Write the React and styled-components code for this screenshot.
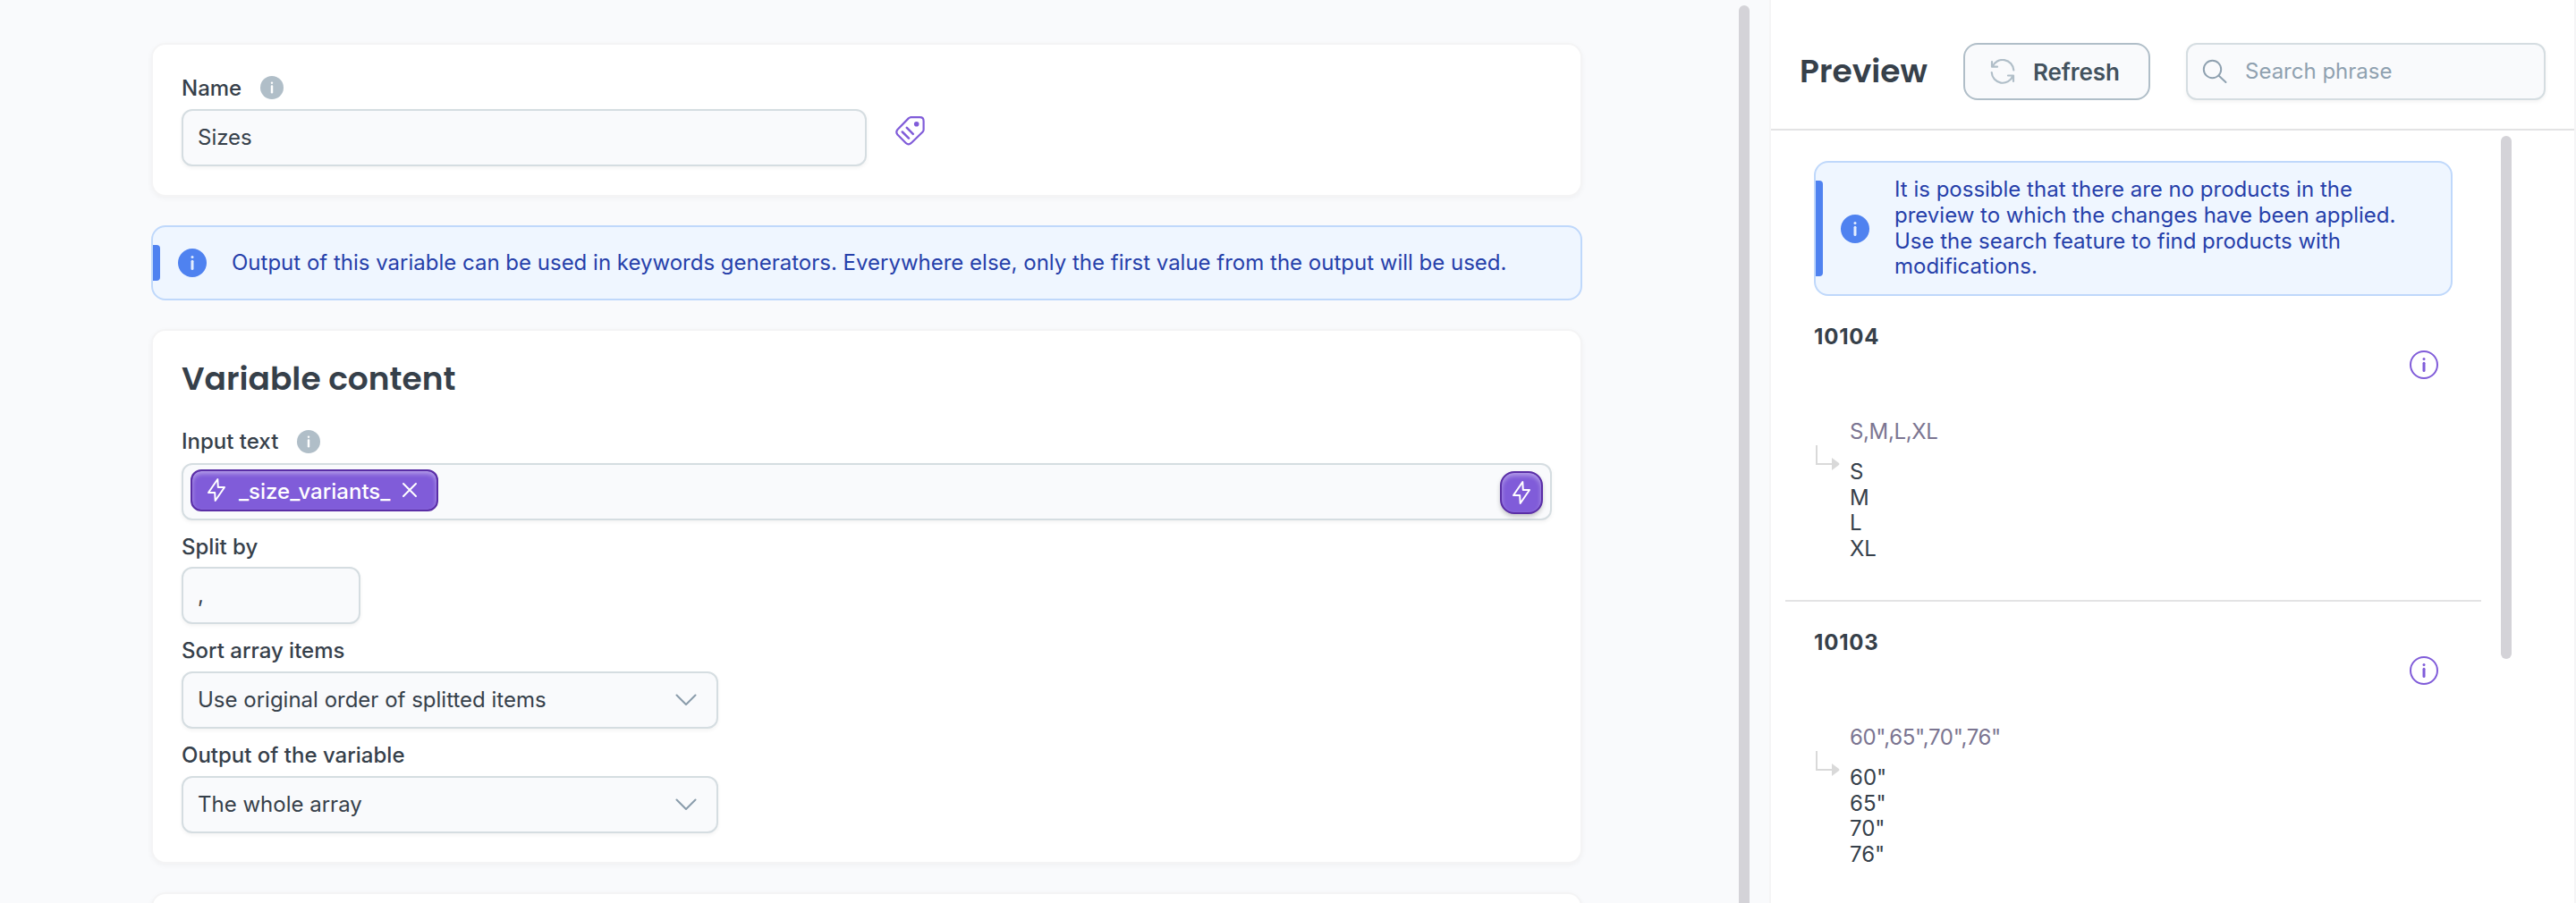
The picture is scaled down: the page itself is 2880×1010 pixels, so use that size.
import React from 'react';
import styled, { createGlobalStyle } from 'styled-components';

const textColor = '#36404a';
const accent = '#805cd9';
const accentDark = '#5a2ea6';
const muted = '#b0bec8';
const inputBg = '#f9fafc';
const inputBorder = '#d5dde1';

const GlobalStyle = createGlobalStyle`
  * { box-sizing: border-box; }
  body {
    margin: 0;
    overflow: hidden;
    background: #f9fafc;
    color: ${textColor};
    font-family: Inter, "Liberation Sans", sans-serif;
    font-size: 24px;
    line-height: 28.8px;
  }
  svg { flex-shrink: 0; }
`;

const Page = styled.div`
  display: flex;
  height: 1010px;
  overflow: hidden;
`;

const Editor = styled.main`
  width: 1944px;
  padding: 48px 175px 0 169px;
  display: flex;
  flex-direction: column;
  gap: 32px;
  flex-shrink: 0;
`;

const Card = styled.section`
  flex-shrink: 0;
  height: ${props => props.height};
  padding: 32px;
  background: #fff;
  border: 2px solid #f4f4f5;
  border-radius: 16px;
  box-shadow: 0 2px 6px rgba(0,0,0,0.04);
`;

const Heading = styled.h2`
  margin: 0;
  font-family: Poppins, Inter, sans-serif;
  font-size: 36px;
  font-weight: 600;
  line-height: 44px;
  white-space: nowrap;
`;

const CardHeading = styled(Heading)`
  margin-bottom: 31.6px;
`;

const Label = styled.div`
  display: flex;
  align-items: center;
  gap: 21px;
  height: 32px;
  margin-bottom: 8px;
  font-weight: 500;
`;

const LabelText = styled.span`
  padding-top: 2px;
`;

const FieldLabel = styled(Label)`
  height: 28.8px;
  margin-top: 16px;
`;

const Row = styled.div`
  display: flex;
  gap: 32px;
`;

const Field = styled.div`
  display: flex;
  align-items: center;
  justify-content: space-between;
  width: ${props => props.width || '100%'};
  height: 64px;
  padding: 0 ${props => props.tight ? '8px' : '16px'};
  background: ${inputBg};
  border: 2px solid ${inputBorder};
  border-radius: 12px;
  box-shadow: 0 2px 4px rgba(0,0,0,0.05);
`;

const SelectField = styled(Field)`
  padding-right: 22px;
`;

const SearchField = styled(Field)`
  justify-content: flex-start;
  gap: 20px;
  color: #8fa1b0;
`;

const TagIconBox = styled.div`
  display: flex;
  padding-top: 8px;
`;

const Alert = styled.div`
  display: flex;
  align-items: center;
  flex-shrink: 0;
  min-height: 84px;
  padding: 16px 40px 16px 0;
  background: #eff6ff;
  border: 2px solid #bfd8fb;
  border-radius: 16px;
  color: #2640aa;
`;

const AlertBar = styled.div`
  align-self: stretch;
  flex-shrink: 0;
  width: 8px;
  margin: 4px 20px 4px 0;
  background: #4f82f0;
  border-radius: 0 4px 4px 0;
`;

const AlertText = styled.div`
  margin-left: 28px;
`;

const Chip = styled.div`
  display: flex;
  align-items: center;
  width: 277px;
  height: 47px;
  margin-bottom: 3px;
  padding: 0 16px;
  background: ${accent};
  border: 2px solid ${accentDark};
  border-radius: 12px;
  box-shadow: inset 0 3px 5px rgba(255,255,255,0.4);
  color: #fff;
  font-weight: 500;

  svg:last-child { margin-left: 13px; }
`;

const ChipText = styled.span`
  margin: 4px 0 0 14px;
`;

const BoltButton = styled.button`
  display: flex;
  align-items: center;
  justify-content: center;
  width: 48px;
  height: 48px;
  margin: 2px 0 0;
  padding: 0;
  background: ${accent};
  border: 2px solid ${accentDark};
  border-radius: 16px;
  box-shadow: inset 0 3px 5px rgba(255,255,255,0.4), 0 3px 5px rgba(0,0,0,0.2);
`;

const Scrollbar = styled.div`
  flex-shrink: 0;
  width: 12px;
  height: ${props => props.height};
  margin: ${props => props.offset} 22px 0;
  background: #d4d3d8;
  border-radius: 6px;
`;

const EditorScrollbar = styled(Scrollbar)`
  margin-left: 0;
`;

const Preview = styled.aside`
  width: 902px;
  flex-shrink: 0;
  background: #fff;
  border: solid #f5f5f6;
  border-width: 0 2px;
`;

const PreviewHeader = styled.header`
  display: flex;
  align-items: flex-start;
  height: 146px;
  padding: 48px 32px 0;
  border-bottom: 2px solid #e3e3e4;
`;

const PreviewHeading = styled(Heading)`
  width: 183px;
  margin-top: 10px;
`;

const RefreshButton = styled.button`
  display: flex;
  align-items: center;
  width: 209px;
  height: 64px;
  margin: 0 40px 0 0;
  padding: 0 0 0 28px;
  gap: 20px;
  background: ${inputBg};
  border: 2px solid ${muted};
  border-radius: 16px;
  color: #43525e;
  font: 600 26px Inter, sans-serif;
  letter-spacing: -0.1px;
`;

const PreviewBody = styled.div`
  display: flex;
  align-items: flex-start;
  padding-left: 16px;
`;

const Results = styled.div`
  width: 778px;

  ${Alert} { margin: 34px 32px 0; }
`;

const Item = styled.article`
  height: 342px;
  padding: 32px 32px 0;
  border-bottom: 2px solid #e3e3e4;
`;

const ItemTitle = styled.div`
  font-weight: 700;
  letter-spacing: 0.8px;
`;

const ItemActions = styled.div`
  display: flex;
  justify-content: flex-end;
  padding-right: 16px;
  height: 77px;
`;

const ItemContent = styled.div`
  display: flex;
  gap: 10px;

  > svg { margin: 29px 0 0 2px; }
`;

const Source = styled.div`
  margin-bottom: 16px;
  color: #7b7591;
  letter-spacing: -0.35px;
`;

const InfoIcon = ({ size = 32, fill = 'none', stroke = 'none', color }) => (
  <svg width={size} height={size} viewBox="0 0 32 32">
    <circle cx="16" cy="16" r={fill === 'none' ? 15 : 16} fill={fill} stroke={stroke} strokeWidth="2" />
    <circle cx="16" cy="9.4" r="1.5" fill={color} />
    <path d="M16 14.2v8.4" stroke={color} strokeWidth="3" strokeLinecap="round" />
  </svg>
);

const BoltIcon = () => (
  <svg width="22" height="28" viewBox="0 0 22 28" fill="none" stroke="#fff" strokeWidth="2" strokeLinejoin="round">
    <path d="M12.3 2 12.8 11H20L9.7 26 9.2 17H2Z" />
  </svg>
);

const CloseIcon = () => (
  <svg width="18" height="18" viewBox="0 0 18 18" stroke="#fff" strokeWidth="2" strokeLinecap="round">
    <path d="M2 2 16 16M16 2 2 16" />
  </svg>
);

const TagIcon = () => (
  <svg width="33" height="33" viewBox="0 0 33 33" fill="none" stroke={accent} strokeWidth="2.2" strokeLinecap="round">
    <path d="M17.5 1.2H27.5Q31.6 1.2 31.6 5.500V15Q31.6 16.500 30.600 17.500L17.500 30.200Q14.700 32.500 12 30.200L2.400 20.500Q.2 17.800 2.400 15L14.700 2.400Q16 1.200 17.500 1.200Z" />
    <circle cx="23.700" cy="8.700" r="2.800" fill={accent} stroke="none" />
    <path d="M7.800 17.500 15 24.700M12.800 12.800 19.800 19.800" strokeWidth="2.500" />
  </svg>
);

const ChevronIcon = () => (
  <svg width="24" height="14" viewBox="0 0 24 14" fill="none" stroke="#8a9cab" strokeWidth="2" strokeLinecap="round" strokeLinejoin="round">
    <path d="M1.5 1.5 12 12 22.5 1.5" />
  </svg>
);

const RefreshIcon = () => (
  <svg width="28" height="28" viewBox="0 0 28 28" fill="none" stroke={muted} strokeWidth="2.2" strokeLinecap="round" strokeLinejoin="round">
    <path d="M2 3V8.700H8M2.600 8.700A12.300 12.300 0 0 1 26.300 12.500M26 25V18.500H20M25.400 19A12.300 12.300 0 0 1 1.700 15" />
  </svg>
);

const SearchIcon = () => (
  <svg width="28" height="28" viewBox="0 0 28 28" fill="none" stroke="#8fa1b0" strokeWidth="2" strokeLinecap="round">
    <circle cx="11.5" cy="11.5" r="9.7" />
    <path d="M18.5 18.5 26.5 26" />
  </svg>
);

const ArrowIcon = () => (
  <svg width="28" height="28" viewBox="0 0 28 28">
    <path d="M1 0V21H19" fill="none" stroke="#d9d9d9" strokeWidth="2" />
    <path d="M18 14 26 20Q27 21 26 22L18 28Z" fill="#d9d9d9" />
  </svg>
);

const HelpIcon = () => <InfoIcon size={26} fill={muted} color="#fff" />;

const Notice = ({ children }) => (
  <Alert>
    <AlertBar />
    <InfoIcon fill="#4f82f0" color="#e4eefe" />
    <AlertText>{children}</AlertText>
  </Alert>
);

const products = [
  { id: '10104', source: 'S,M,L,XL', values: ['S', 'M', 'L', 'XL'] },
  { id: '10103', source: '60",65",70",76"', values: ['60"', '65"', '70"', '76"'] },
];

const Product = ({ id, source, values }) => (
  <Item>
    <ItemTitle>{id}</ItemTitle>
    <ItemActions>
      <InfoIcon stroke={accent} color={accent} />
    </ItemActions>
    <ItemContent>
      <ArrowIcon />
      <div>
        <Source>{source}</Source>
        {values.map(value => <div key={value}>{value}</div>)}
      </div>
    </ItemContent>
  </Item>
);

const App = () => (
  <Page>
    <GlobalStyle />
    <Editor>
      <Card height="172px">
        <Label><LabelText>Name</LabelText> <HelpIcon /></Label>
        <Row>
          <Field width="766px">Sizes</Field>
          <TagIconBox><TagIcon /></TagIconBox>
        </Row>
      </Card>
      <Notice>
        Output of this variable can be used in keywords generators. Everywhere else, only the first value from the output will be used.
      </Notice>
      <Card height="598px">
        <CardHeading>Variable content</CardHeading>
        <Label><LabelText>Input text</LabelText> <HelpIcon /></Label>
        <Field tight>
          <Chip><BoltIcon /><ChipText>_size_variants_</ChipText><CloseIcon /></Chip>
          <BoltButton><BoltIcon /></BoltButton>
        </Field>
        <FieldLabel>Split by</FieldLabel>
        <Field width="200px">,</Field>
        <FieldLabel>Sort array items</FieldLabel>
        <SelectField width="600px">Use original order of splitted items <ChevronIcon /></SelectField>
        <FieldLabel>Output of the variable</FieldLabel>
        <SelectField width="600px">The whole array <ChevronIcon /></SelectField>
      </Card>
      <Card height="200px" />
    </Editor>
    <EditorScrollbar height="1100px" offset="6px" />
    <Preview>
      <PreviewHeader>
        <PreviewHeading>Preview</PreviewHeading>
        <RefreshButton><RefreshIcon />Refresh</RefreshButton>
        <SearchField width="402px"><SearchIcon />Search phrase</SearchField>
      </PreviewHeader>
      <PreviewBody>
        <Results>
          <Notice>
            It is possible that there are no products in the preview to which the changes have been applied. Use the search feature to find products with modifications.
          </Notice>
          {products.map(product => <Product key={product.id} {...product} />)}
        </Results>
        <Scrollbar height="585px" offset="6px" />
      </PreviewBody>
    </Preview>
  </Page>
);

export default App;
